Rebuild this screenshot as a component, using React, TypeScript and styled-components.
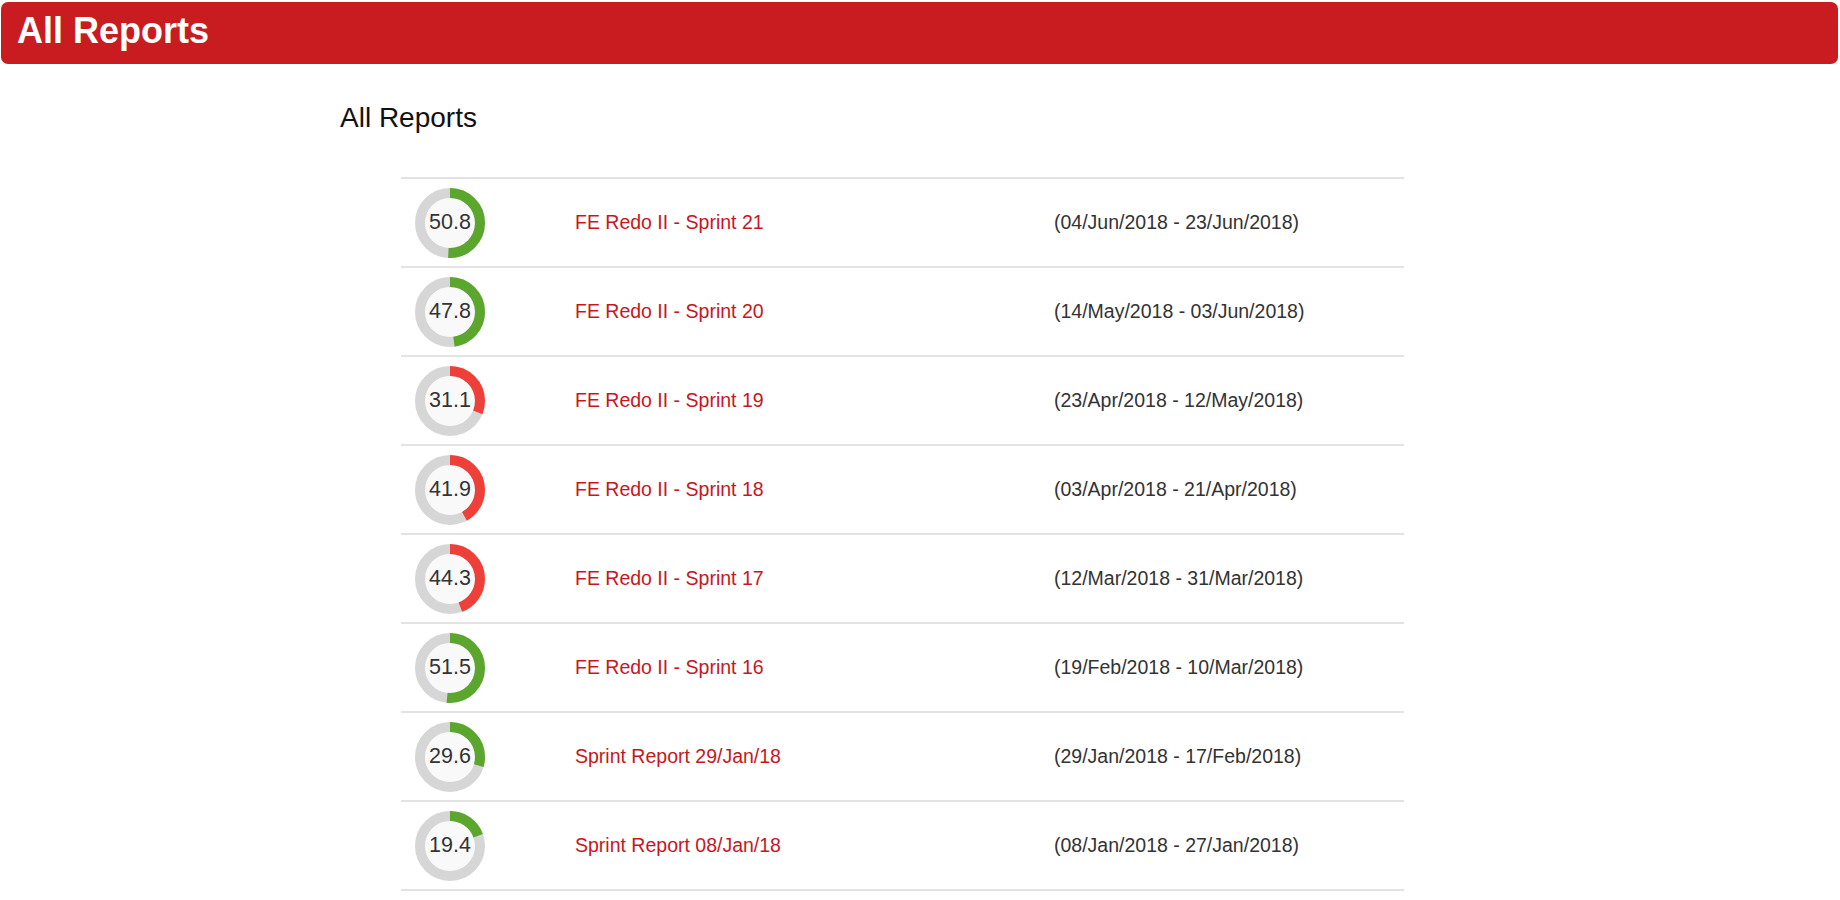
import styled, { createGlobalStyle } from "styled-components";

const GlobalStyle = createGlobalStyle`
  body {
    margin: 0;
    background: #ffffff;
    font-family: "Liberation Sans", Arial, sans-serif;
  }
`;

type Report = {
  score: number;
  good: boolean;
  name: string;
  range: string;
};

const reports: Report[] = [
  { score: 50.8, good: true, name: "FE Redo II - Sprint 21", range: "(04/Jun/2018 - 23/Jun/2018)" },
  { score: 47.8, good: true, name: "FE Redo II - Sprint 20", range: "(14/May/2018 - 03/Jun/2018)" },
  { score: 31.1, good: false, name: "FE Redo II - Sprint 19", range: "(23/Apr/2018 - 12/May/2018)" },
  { score: 41.9, good: false, name: "FE Redo II - Sprint 18", range: "(03/Apr/2018 - 21/Apr/2018)" },
  { score: 44.3, good: false, name: "FE Redo II - Sprint 17", range: "(12/Mar/2018 - 31/Mar/2018)" },
  { score: 51.5, good: true, name: "FE Redo II - Sprint 16", range: "(19/Feb/2018 - 10/Mar/2018)" },
  { score: 29.6, good: true, name: "Sprint Report 29/Jan/18", range: "(29/Jan/2018 - 17/Feb/2018)" },
  { score: 19.4, good: true, name: "Sprint Report 08/Jan/18", range: "(08/Jan/2018 - 27/Jan/2018)" },
];

function Donut({ score, good }: { score: number; good: boolean }) {
  const r = 30;
  const circ = 2 * Math.PI * r;
  const filled = (score / 100) * circ;
  return (
    <DonutBox>
      <svg width="70" height="70" viewBox="0 0 70 70">
        <circle cx="35" cy="35" r={r} fill="#f9f9f9" stroke="#d6d6d6" strokeWidth="10" />
        <circle
          cx="35"
          cy="35"
          r={r}
          fill="none"
          stroke={good ? "#5ba62d" : "#ee4039"}
          strokeWidth="10"
          strokeDasharray={`${filled} ${circ}`}
          transform="rotate(-90 35 35)"
        />
      </svg>
      <DonutLabel>{score.toFixed(1)}</DonutLabel>
    </DonutBox>
  );
}

export default function App() {
  return (
    <>
      <GlobalStyle />
      <Header>
        <HeaderTitle>All Reports</HeaderTitle>
      </Header>
      <Content>
        <PageTitle>All Reports</PageTitle>
        <ReportList>
          {reports.map((r) => (
            <ReportRow key={r.name}>
              <Donut score={r.score} good={r.good} />
              <ReportLink href="#">{r.name}</ReportLink>
              <DateRange>{r.range}</DateRange>
            </ReportRow>
          ))}
        </ReportList>
      </Content>
    </>
  );
}

const Header = styled.header`
  margin: 2px 2px 0 1px;
  height: 62px;
  background: #c91c21;
  border-radius: 7px;
  display: flex;
  align-items: center;
  padding: 0 16px 4px;
  box-sizing: border-box;
`;

const HeaderTitle = styled.h1`
  margin: 0;
  color: #ffffff;
  font-size: 36px;
  font-weight: 700;
`;

const Content = styled.main`
  padding-left: 340px;
`;

const PageTitle = styled.h2`
  margin: 38px 0 43px;
  font-size: 28px;
  font-weight: 400;
  color: #111;
`;

const ReportList = styled.div`
  margin-left: 61px;
  width: 1003px;
  border-bottom: 2px solid #e3e3e3;
`;

const ReportRow = styled.div`
  display: grid;
  grid-template-columns: 174px 479px 1fr;
  align-items: center;
  height: 87px;
  border-top: 2px solid #e3e3e3;
  font-size: 19.5px;
`;

const DonutBox = styled.div`
  position: relative;
  width: 70px;
  height: 70px;
  margin-left: 14px;
`;

const DonutLabel = styled.span`
  position: absolute;
  inset: 0;
  display: flex;
  align-items: center;
  justify-content: center;
  font-size: 21.5px;
  color: #333;
`;

const ReportLink = styled.a`
  color: #c8161e;
  text-decoration: none;
`;

const DateRange = styled.span`
  color: #333;
`;
